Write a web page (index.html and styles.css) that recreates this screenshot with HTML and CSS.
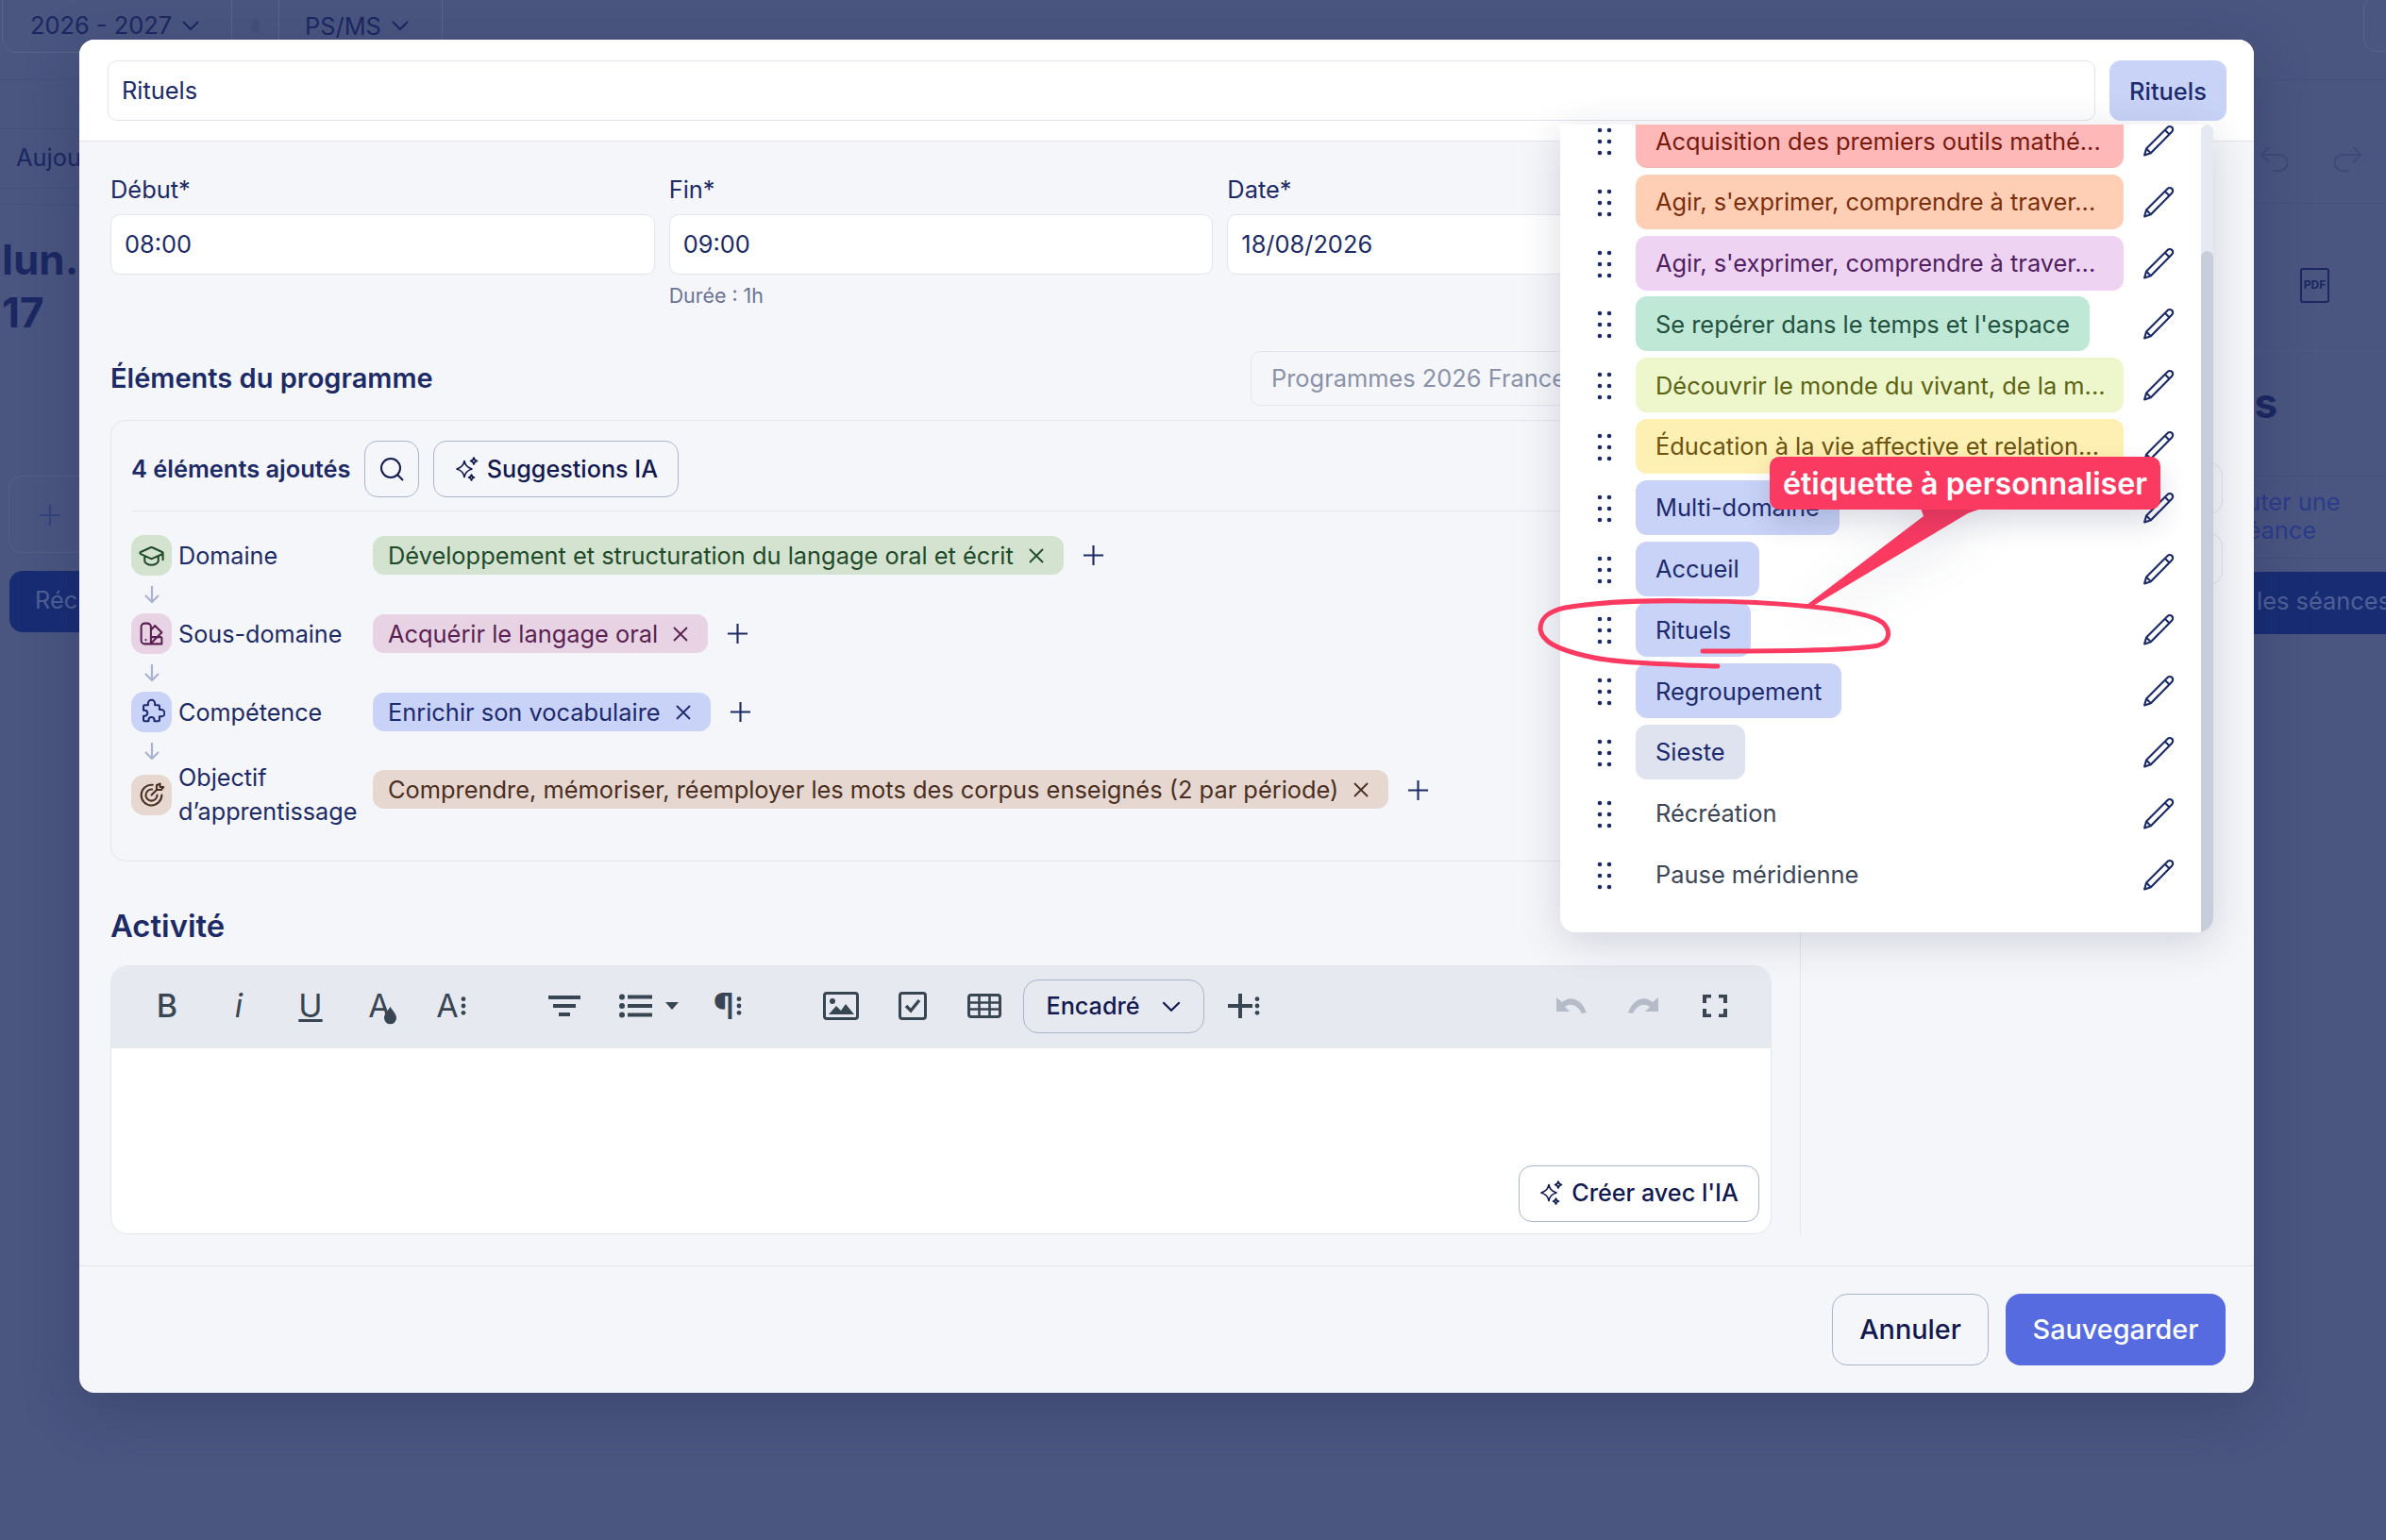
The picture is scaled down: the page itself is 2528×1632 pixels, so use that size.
FILE: index.html
```html
<!DOCTYPE html>
<html lang="fr">
  <head>
    <meta charset="UTF-8" />
    <title>Rituels</title>
    <link rel="stylesheet" href="styles.css">
  </head>
  <body>
    <svg class="sprites" width="0" height="0">
      <symbol id="pencil" viewBox="0 0 32 32"><path d="M2 30.500 3.800 24 25 2.800a3 3 0 0 1 4.400 4.200L8.300 28.400ZM3.800 24l4.500 4.400M22.400 5.400l4.500 4.400" fill="none" stroke="currentColor" stroke-width="2" stroke-linejoin="round"/></symbol>
      <symbol id="grip" viewBox="0 0 16 30"><circle cx="3" cy="3" r="2.300"/><circle cx="13" cy="3" r="2.300"/><circle cx="3" cy="15" r="2.300"/><circle cx="13" cy="15" r="2.300"/><circle cx="3" cy="27" r="2.300"/><circle cx="13" cy="27" r="2.300"/></symbol>
      <symbol id="sparkle" viewBox="0 0 26 26"><path d="M10 4.500c.9 4.800 2.800 6.800 8 8.500-5.200 1.700-7.100 3.700-8 8.500-.9-4.800-2.800-6.800-8-8.500 5.200-1.700 7.100-3.700 8-8.500ZM20 1c.4 2.300 1.200 3.100 3.500 3.500-2.300.4-3.100 1.200-3.500 3.500-.4-2.300-1.200-3.100-3.500-3.500 2.300-.4 3.100-1.200 3.500-3.500ZM17.500 19c.3 2 1 2.700 3 3-2 .3-2.700 1-3 3-.3-2-1-2.700-3-3 2-.3 2.700-1 3-3Z" fill="none" stroke="currentColor" stroke-width="1.700" stroke-linejoin="round"/></symbol>
      <symbol id="chevron" viewBox="0 0 20 12"><path d="M2 2l8 8 8-8" fill="none" stroke="currentColor" stroke-width="2"/></symbol>
      <symbol id="cross" viewBox="0 0 20 20"><path d="M3 3l14 14M17 3 3 17" fill="none" stroke="currentColor" stroke-width="1.800"/></symbol>
      <symbol id="plus" viewBox="0 0 24 24"><path d="M12 1v22M1 12h22" fill="none" stroke="currentColor" stroke-width="2.200"/></symbol>
      <symbol id="down" viewBox="0 0 20 20"><path d="M10 1v17M3 11l7 7 7-7" fill="none" stroke="currentColor" stroke-width="2.200"/></symbol>
      <symbol id="vdots" viewBox="0 0 6 24"><circle cx="3" cy="4" r="2.600"/><circle cx="3" cy="12" r="2.600"/><circle cx="3" cy="20" r="2.600"/></symbol>
    </svg>

    <div class="backdrop">
      <div class="bg-left">
        <div class="bg-top">
          <span class="bg-select">2026 - 2027 <svg class="bg-chev"><use href="#chevron"/></svg></span>
          <i class="bg-dot"></i>
          <span class="bg-select bg-select-small">PS/MS <svg class="bg-chev"><use href="#chevron"/></svg></span>
        </div>
        <div class="bg-empty"></div>
        <div class="bg-today">Aujourd'hui</div>
        <div class="bg-date">lun.<br>17</div>
        <div class="bg-add"><svg class="bg-plus"><use href="#plus"/></svg></div>
        <div class="bg-band">Récréation</div>
      </div>
      <div class="bg-right">
        <div class="bg-right-top"><span class="bg-corner"></span></div>
        <div class="bg-history">
          <svg class="bg-arrow" viewBox="0 0 30 30"><path d="M10 2 2 10l8 8M2 10h19a8 8 0 0 1 0 17h-7" fill="none" stroke="currentColor" stroke-width="2"/></svg>
          <svg class="bg-arrow" viewBox="0 0 30 30"><path d="M20 2l8 8-8 8M28 10H9a8 8 0 0 0 0 17h7" fill="none" stroke="currentColor" stroke-width="2"/></svg>
        </div>
        <div class="bg-pdf"><span class="bg-pdf-box">PDF</span></div>
        <div class="bg-title">Séances</div>
        <div class="bg-action">Ajouter une<br>séance</div>
        <div class="bg-band bg-band-right">Toutes les séances</div>
      </div>
    </div>

    <div class="overlay">
      <div class="modal">
        <div class="modal-head">
          <div class="field title-field">Rituels</div>
          <span class="tag tag-blue tag-head">Rituels</span>
        </div>

        <div class="modal-body">
          <div class="main">
            <div class="fields">
              <div>
                <div class="label">Début*</div>
                <div class="field">08:00</div>
              </div>
              <div>
                <div class="label">Fin*</div>
                <div class="field">09:00</div>
                <div class="hint">Durée : 1h</div>
              </div>
              <div>
                <div class="label">Date*</div>
                <div class="field">18/08/2026</div>
              </div>
            </div>

            <div class="section-head">
              <h2>Éléments du programme</h2>
              <div class="field program-field">Programmes 2026 France</div>
            </div>

            <div class="card">
              <div class="card-head">
                <strong>4 éléments ajoutés</strong>
                <button class="btn btn-icon"><svg width="28" height="28" viewBox="0 0 28 28"><circle cx="13" cy="13" r="10" fill="none" stroke="currentColor" stroke-width="2"/><path d="M20 20l6 6" stroke="currentColor" stroke-width="2"/></svg></button>
                <button class="btn"><svg class="spark"><use href="#sparkle"/></svg>Suggestions IA</button>
              </div>

              <div class="level">
                <span class="level-icon green"><svg viewBox="0 0 24 24"><path d="M21.420 10.920a1 1 0 0 0-.020-1.840L12.830 5.180a2 2 0 0 0-1.660 0L2.600 9.080a1 1 0 0 0 0 1.830l8.570 3.910a2 2 0 0 0 1.660 0zM22 10v6M6 12.500V17c0 1.500 3 3.500 6 3.500s6-2 6-3.500v-4.500"/></svg></span>
                <span class="level-name">Domaine</span>
                <span class="chip green">Développement et structuration du langage oral et écrit <svg class="x"><use href="#cross"/></svg></span>
                <svg class="add"><use href="#plus"/></svg>
              </div>
              <div class="level-arrow"><svg><use href="#down"/></svg></div>
              <div class="level">
                <span class="level-icon pink"><svg viewBox="0 0 24 24"><path d="M11.500 20V6a3 3 0 0 0-3-3H6a3 3 0 0 0-3 3v12a3 3 0 0 0 3 3h15v-5a1 1 0 0 0-1-1h-8.500M11.500 9l3.500-4 6 6-9.500 9.500"/><path d="M7 17.500h.01"/></svg></span>
                <span class="level-name">Sous-domaine</span>
                <span class="chip pink">Acquérir le langage oral <svg class="x"><use href="#cross"/></svg></span>
                <svg class="add"><use href="#plus"/></svg>
              </div>
              <div class="level-arrow"><svg><use href="#down"/></svg></div>
              <div class="level">
                <span class="level-icon blue"><svg viewBox="0 0 24 24"><path d="M9 4.500a3 3 0 0 1 6 0V6h3a1 1 0 0 1 1 1v3h1.500a3 3 0 0 1 0 6H19v3a1 1 0 0 1-1 1h-3.500v-1a2.500 2.500 0 0 0-5 0v1H6a1 1 0 0 1-1-1v-3.500h1a2.500 2.500 0 0 0 0-5H5V7a1 1 0 0 1 1-1h3z"/></svg></span>
                <span class="level-name">Compétence</span>
                <span class="chip blue">Enrichir son vocabulaire <svg class="x"><use href="#cross"/></svg></span>
                <svg class="add"><use href="#plus"/></svg>
              </div>
              <div class="level-arrow level-arrow-short"><svg><use href="#down"/></svg></div>
              <div class="level level-tall">
                <span class="level-icon brown"><svg viewBox="0 0 24 24"><path d="M13 3.100A9 9 0 1 0 21 12M12.500 7.100A5 5 0 1 0 17 12M12 12l5-5M16.500 3.500V7.500h4l2-2.500h-3V2z"/></svg></span>
                <span class="level-name">Objectif d’apprentissage</span>
                <span class="chip brown">Comprendre, mémoriser, réemployer les mots des corpus enseignés (2 par période) <svg class="x"><use href="#cross"/></svg></span>
                <svg class="add"><use href="#plus"/></svg>
              </div>
            </div>

            <h2 class="activity-title">Activité</h2>

            <div class="editor">
              <div class="toolbar">
                <span class="tool tool-text tool-bold">B</span>
                <span class="tool tool-text tool-italic">i</span>
                <span class="tool tool-text tool-under">U</span>
                <span class="tool tool-text">A<svg class="drop" viewBox="0 0 14 20"><path d="M7 0c2 4 7 8 7 13a7 7 0 0 1-14 0C0 8 5 4 7 0z"/></svg></span>
                <span class="tool tool-text tool-size">A<svg class="vd"><use href="#vdots"/></svg></span>

                <span class="tool tool-gap"><svg width="34" height="26" viewBox="0 0 34 26"><path d="M0 2h34v4H0zM5 11h24v4H5zM11 20h12v4H11z"/></svg></span>
                <span class="tool"><svg width="36" height="26" viewBox="0 0 36 26"><circle cx="3" cy="3.500" r="3"/><circle cx="3" cy="13" r="3"/><circle cx="3" cy="22.500" r="3"/><path d="M9 1.500h26v4H9zM9 11h26v4H9zM9 20.500h26v4H9z"/></svg></span>
                <span class="tool tool-caret"><i></i></span>
                <span class="tool tool-text tool-para">¶<svg class="vd"><use href="#vdots"/></svg></span>

                <span class="tool tool-gap tool-gap-wide"><svg width="38" height="30" viewBox="0 0 38 30"><rect x="1.500" y="1.500" width="35" height="27" rx="2.500" fill="none" stroke="currentColor" stroke-width="3"/><circle cx="10" cy="10" r="3"/><path d="M6 24l8-9 5 5 5-7 9 11z"/></svg></span>
                <span class="tool"><svg width="30" height="30" viewBox="0 0 30 30"><rect x="1.500" y="1.500" width="27" height="27" rx="2.500" fill="none" stroke="currentColor" stroke-width="3"/><path d="M8 15l5 5 9-11" fill="none" stroke="currentColor" stroke-width="3.400"/></svg></span>
                <span class="tool"><svg width="36" height="26" viewBox="0 0 36 26"><rect x="1.500" y="1.500" width="33" height="23" rx="2.500" fill="none" stroke="currentColor" stroke-width="3"/><path d="M1 9.500h34M1 16.500h34M12.500 1v24M23.500 1v24" fill="none" stroke="currentColor" stroke-width="2.600"/></svg></span>

                <button class="btn btn-style">Encadré <svg class="chev"><use href="#chevron"/></svg></button>
                <span class="tool tool-more"><svg width="26" height="28" viewBox="0 0 26 28"><path d="M11 1h4v26h-4zM0 12h26v4H0z"/></svg><svg class="vd"><use href="#vdots"/></svg></span>

                <span class="tool tool-right tool-off"><svg width="34" height="20" viewBox="0 0 34 20"><path d="M1 1v15h14l-5-5c5-4 13-3 18 7l5-1C28 3 16-2 7 6z"/></svg></span>
                <span class="tool tool-off"><svg width="34" height="20" viewBox="0 0 34 20"><path d="M33 1v15H19l5-5c-5-4-13-3-18 7l-5-1C6 3 18-2 27 6z"/></svg></span>
                <span class="tool"><svg width="28" height="26" viewBox="0 0 28 26"><path d="M1 10V1h9v3.500H5V10zM27 10V1h-9v3.500h5V10zM1 16v9h9v-3.500H5V16zM27 16v9h-9v-3.500h5V16z"/></svg></span>
              </div>
              <div class="editor-area">
                <button class="btn btn-ai"><svg class="spark"><use href="#sparkle"/></svg>Créer avec l'IA</button>
              </div>
            </div>
          </div>

          <div class="side">
            <div class="side-box"></div>
            <div class="side-box"></div>
          </div>
        </div>

        <div class="modal-foot">
          <button class="btn btn-big">Annuler</button>
          <button class="btn btn-big btn-primary">Sauvegarder</button>
        </div>

        <div class="picker">
          <ul class="picker-list">
            <li><svg class="grip"><use href="#grip"/></svg><span class="tag tag-wide tag-red">Acquisition des premiers outils mathé...</span><svg class="pencil"><use href="#pencil"/></svg></li>
            <li><svg class="grip"><use href="#grip"/></svg><span class="tag tag-wide tag-orange">Agir, s'exprimer, comprendre à traver...</span><svg class="pencil"><use href="#pencil"/></svg></li>
            <li><svg class="grip"><use href="#grip"/></svg><span class="tag tag-wide tag-purple">Agir, s'exprimer, comprendre à traver...</span><svg class="pencil"><use href="#pencil"/></svg></li>
            <li><svg class="grip"><use href="#grip"/></svg><span class="tag tag-teal">Se repérer dans le temps et l'espace</span><svg class="pencil"><use href="#pencil"/></svg></li>
            <li><svg class="grip"><use href="#grip"/></svg><span class="tag tag-wide tag-lime">Découvrir le monde du vivant, de la m...</span><svg class="pencil"><use href="#pencil"/></svg></li>
            <li><svg class="grip"><use href="#grip"/></svg><span class="tag tag-wide tag-yellow">Éducation à la vie affective et relation...</span><svg class="pencil"><use href="#pencil"/></svg></li>
            <li><svg class="grip"><use href="#grip"/></svg><span class="tag tag-blue">Multi-domaine</span><svg class="pencil"><use href="#pencil"/></svg></li>
            <li><svg class="grip"><use href="#grip"/></svg><span class="tag tag-blue">Accueil</span><svg class="pencil"><use href="#pencil"/></svg></li>
            <li><svg class="grip"><use href="#grip"/></svg><span class="tag tag-blue">Rituels</span><svg class="pencil"><use href="#pencil"/></svg></li>
            <li><svg class="grip"><use href="#grip"/></svg><span class="tag tag-blue">Regroupement</span><svg class="pencil"><use href="#pencil"/></svg></li>
            <li><svg class="grip"><use href="#grip"/></svg><span class="tag tag-gray">Sieste</span><svg class="pencil"><use href="#pencil"/></svg></li>
            <li><svg class="grip"><use href="#grip"/></svg><span class="tag tag-none">Récréation</span><svg class="pencil"><use href="#pencil"/></svg></li>
            <li><svg class="grip"><use href="#grip"/></svg><span class="tag tag-none">Pause méridienne</span><svg class="pencil"><use href="#pencil"/></svg></li>
          </ul>
          <div class="scrollbar"><div class="scroll-thumb"></div></div>
        </div>
      </div>
    </div>

    <!-- annotation drawn over the screenshot -->
    <svg class="scribble" width="2528" height="1632" viewBox="0 0 2528 1632">
      <path class="tail" d="M2034 536 2038 547 1913 642 1921 642 2085 544Q2094 540 2106 538L2106 534Z"/>
      <path class="ring" d="M1820 706C1770 704 1710 703 1680 695 1650 688 1634 680 1632 667 1632 655 1640 648 1658 644 1700 637 1760 636 1800 637 1850 637 1890 640 1920 643 1960 647 1985 652 1995 660 2004 669 2002 680 1990 684 1960 690 1870 690 1804 690"/>
    </svg>
    <div class="callout">étiquette à personnaliser</div>
  </body>
</html>
```

FILE: styles.css
```css
* {
  box-sizing: border-box;
}

html,
body {
  margin: 0;
  padding: 0;
  width: 2528px;
  height: 1632px;
  overflow: hidden;
}

body {
  position: relative;
  font-family: Inter, "Liberation Sans", sans-serif;
  font-size: 25.4px;
  color: #1c2a66;
  background-color: #4a5580;
}

button {
  font-family: inherit;
}

ul {
  list-style: none;
  margin: 0;
  padding: 0;
}

.sprites {
  position: absolute;
}

/* dimmed page behind the modal */
.backdrop {
  display: flex;
  justify-content: space-between;
  height: 100%;
  color: #1b2862;
}

.bg-left {
  width: 600px;
}

.bg-right {
  width: 300px;
}

.bg-top {
  display: flex;
  align-items: flex-start;
  height: 85px;
  padding-left: 2px;
  border-bottom: 1px solid #454f78;
}

.bg-select {
  display: flex;
  align-items: center;
  gap: 10px;
  width: 244px;
  height: 59px;
  margin-top: -3px;
  padding-left: 29px;
  border: 1px solid #5a6489;
  border-radius: 0 0 16px 16px;
}

.bg-select-small {
  width: 174px;
  padding-left: 27px;
  border-bottom: 0;
}

.bg-dot {
  width: 8px;
  height: 14px;
  margin: 20px 20px 0 21px;
  border-radius: 4px;
  background-color: #454f78;
}

.bg-chev {
  width: 20px;
  height: 12px;
}

.bg-empty {
  height: 52px;
  border-bottom: 1px solid #454f78;
}

.bg-today {
  height: 63px;
  padding-left: 17px;
  line-height: 60px;
  border-bottom: 1px solid #454f78;
}

.bg-date {
  height: 289px;
  margin-top: 16px;
  padding-top: 30px;
  padding-left: 2px;
  border-top: 1px solid #454f78;
  font-size: 44px;
  font-weight: 700;
  line-height: 56px;
}

.bg-add {
  height: 82px;
  margin-left: 9px;
  margin-top: -1px;
  padding: 28px 0 0 31px;
  border: 1px solid #565f86;
  border-radius: 14px;
  color: #33447f;
}

.bg-plus {
  width: 24px;
  height: 24px;
}

.bg-band {
  height: 65px;
  margin: 19px 0 0 10px;
  padding-left: 27px;
  border-radius: 14px;
  background-color: #182c74;
  color: #4f6096;
  line-height: 62px;
  white-space: nowrap;
}

.bg-right-top {
  position: relative;
  height: 85px;
  border-bottom: 1px solid #454f78;
}

.bg-corner {
  position: absolute;
  right: -10px;
  top: -4px;
  width: 34px;
  height: 59px;
  border: 1px solid #5a6489;
  border-radius: 14px;
}

.bg-history {
  display: flex;
  justify-content: flex-end;
  gap: 49px;
  height: 131px;
  padding: 69px 25px 0 0;
  border-bottom: 1px solid #454f78;
  color: #3f4a76;
}

.bg-arrow {
  width: 30px;
  height: 30px;
}

.bg-pdf {
  height: 156px;
  padding: 68px 0 0 209px;
  border-bottom: 1px solid #4f5a82;
}

.bg-pdf-box {
  display: block;
  width: 31px;
  height: 37px;
  border: 2px solid #1b2862;
  border-radius: 3px;
  font-size: 12px;
  font-weight: 700;
  line-height: 32px;
  text-align: center;
}

.bg-title {
  height: 133px;
  padding: 28px 0 0 0;
  border-bottom: 1px solid #454f78;
  font-size: 44px;
  font-weight: 700;
}

.bg-action {
  height: 87px;
  padding: 12px 45px 0 110px;
  border-bottom: 1px solid #454f78;
  color: #2a3c8c;
  line-height: 30px;
  text-align: center;
}

.bg-band-right {
  height: 66px;
  margin: 14px 0 0 -120px;
  width: 420px;
  padding-left: 195px;
  border-radius: 0;
}

/* modal */
.overlay {
  position: absolute;
  left: 84px;
  top: 42px;
}

.modal {
  position: relative;
  display: flex;
  flex-direction: column;
  width: 2304px;
  height: 1434px;
  border-radius: 16px;
  background-color: #f5f6f9;
  box-shadow: 0 16px 60px rgba(30, 36, 70, 0.28);
}

.modal-head {
  display: flex;
  gap: 15px;
  height: 108px;
  padding: 22px 29px 22px 30px;
  border-radius: 16px 16px 0 0;
  border-bottom: 1px solid #e2e5ee;
  background-color: #fff;
}

.field {
  height: 64px;
  padding: 0 14px;
  border: 1px solid #e2e5ee;
  border-radius: 10px;
  background-color: #fff;
  line-height: 62px;
}

.title-field {
  flex: 1;
}

.modal-body {
  display: flex;
  flex: 1;
  padding: 36px 33px 33px 33px;
}

.main {
  width: 1760px;
  flex-shrink: 0;
}

.fields {
  display: grid;
  grid-template-columns: repeat(3, 1fr);
  gap: 15px;
  height: 141px;
}

.label {
  height: 41px;
  line-height: 30px;
}

.hint {
  margin-top: 9px;
  font-size: 21.4px;
  line-height: 26px;
  color: #6a7397;
}

.section-head {
  display: flex;
  align-items: center;
  justify-content: space-between;
  margin-top: 45px;
}

h2 {
  margin: 0 0 2px;
  font-size: 29px;
  font-weight: 600;
}

.program-field {
  width: 552px;
  height: 58px;
  padding: 0 21px;
  border-color: #e2e5ee;
  background-color: #f5f6f9;
  color: #8a91a8;
  line-height: 56px;
  white-space: nowrap;
}

.card {
  height: 468px;
  margin-top: 15px;
  padding: 21px 22px 0 21px;
  border: 1px solid #e2e5ee;
  border-radius: 16px;
}

.card-head {
  display: flex;
  align-items: center;
  gap: 15px;
  height: 75px;
  padding: 0 0 15px 0;
  margin-bottom: 25px;
  border-bottom: 1px solid #e2e5ee;
}

.card-head strong {
  font-weight: 600;
}

.btn {
  display: flex;
  align-items: center;
  justify-content: center;
  gap: 8px;
  width: 260px;
  height: 60px;
  padding: 0;
  border: 1px solid #a9b4ce;
  border-radius: 14px;
  background-color: transparent;
  color: #11194f;
  font-size: 25.2px;
  font-weight: 500;
}

.btn-icon {
  width: 58px;
}

.spark {
  width: 26px;
  height: 26px;
}

.level {
  display: flex;
  align-items: center;
  height: 43px;
}

.level-icon {
  display: flex;
  align-items: center;
  justify-content: center;
  flex-shrink: 0;
  width: 43px;
  height: 43px;
  border-radius: 14px;
}

.level-icon svg {
  width: 29px;
  height: 29px;
  fill: none;
  stroke: currentColor;
  stroke-width: 1.700;
  stroke-linejoin: round;
  stroke-linecap: round;
}

.level-name {
  width: 213px;
  flex-shrink: 0;
  padding-left: 7px;
  font-size: 25.2px;
  line-height: 36px;
}

.chip {
  display: flex;
  align-items: center;
  gap: 14px;
  height: 41px;
  padding: 0 19px 0 16px;
  border-radius: 12px;
  white-space: nowrap;
}

.x {
  width: 20px;
  height: 20px;
}

.add {
  width: 23px;
  height: 23px;
  margin-left: 20px;
}

.green {
  background-color: #d3e3d0;
  color: #1f4a2a;
}

.pink {
  background-color: #e8d3e5;
  color: #5a1f52;
}

.blue {
  background-color: #c9d3f7;
  color: #1c2a6e;
}

.brown {
  background-color: #e6d8d0;
  color: #4a2e22;
}

.level-arrow {
  height: 40px;
  padding: 10px 0 0 12px;
  color: #a9b2cf;
}

.level-arrow svg {
  width: 20px;
  height: 20px;
  display: block;
}

.level-arrow-short {
  height: 30px;
}

.level-tall {
  height: 72px;
}

.level-tall .chip {
  align-self: flex-start;
  margin-top: 10px;
}

.level-tall .add {
  align-self: flex-start;
  margin-top: 20px;
}

.activity-title {
  margin-top: 48px;
  margin-bottom: 0;
  height: 40px;
  font-size: 32.8px;
  line-height: 40px;
}

.editor {
  height: 285px;
  margin-top: 22px;
  border: 1px solid #e2e5ee;
  border-radius: 18px;
  background-color: #fff;
  overflow: hidden;
}

.toolbar {
  display: flex;
  align-items: center;
  height: 87px;
  padding: 0 21px 3px;
  background-color: #e7e9f0;
  color: #384653;
  fill: #384653;
}

.tool {
  display: flex;
  align-items: center;
  justify-content: center;
  flex-shrink: 0;
  width: 76px;
}

.tool-text {
  font-size: 34px;
  line-height: 40px;
}

.tool-bold {
  font-weight: 500;
}

.tool-italic {
  font-style: italic;
}

.tool-under {
  text-decoration: underline;
  text-decoration-thickness: 3px;
  text-underline-offset: 2px;
}

.tool-size {
  margin-left: -3px;
  margin-right: 3px;
}

.drop {
  width: 13px;
  height: 20px;
  margin: 20px 0 0 -7px;
}

.vd {
  width: 6px;
  height: 22px;
  margin-left: 2px;
}

.tool-gap {
  margin-left: 41px;
}

.tool-gap-wide {
  margin-left: 44px;
}

.tool-caret {
  width: 22px;
  margin-left: -11px;
}

.tool-caret i {
  width: 0;
  height: 0;
  border: 7px solid transparent;
  border-top: 8px solid #384653;
  border-bottom: 0;
}

.tool-para {
  margin-left: 10px;
  font-size: 38px;
  font-weight: 500;
}

.tool-more {
  margin-left: 4px;
}

.tool-right {
  margin-left: auto;
}

.tool-off {
  fill: #b5bcc8;
}

.btn-style {
  width: 192px;
  height: 57px;
  margin-left: 3px;
  gap: 22px;
  color: #11194f;
  border-radius: 16px;
}

.chev {
  width: 22px;
  height: 13px;
}

.editor-area {
  display: flex;
  justify-content: flex-end;
  padding: 124px 12px 0 0;
}

.btn-ai {
  width: 255px;
  background-color: #fff;
  padding-bottom: 2px;
}

.side {
  display: flex;
  flex-direction: column;
  gap: 20px;
  width: 448px;
  margin-left: 30px;
  padding-top: 304px;
  border-left: 1px solid #e2e5ee;
}

.side-box {
  height: 55px;
  border: 1px solid #dde0ea;
  border-radius: 14px;
}

.modal-foot {
  display: flex;
  justify-content: flex-end;
  gap: 18px;
  height: 135px;
  padding: 29px 30px 0 0;
  border-top: 1px solid #e2e5ee;
}

.btn-big {
  width: 166px;
  height: 76px;
  padding-bottom: 2px;
  font-size: 28.8px;
  border-radius: 16px;
}

.btn-primary {
  width: 233px;
  border: 0;
  background-color: #566be0;
  color: #fff;
}

/* tag picker */
.tag {
  display: flex;
  align-items: center;
  height: 58px;
  padding: 0 21px;
  border-radius: 12px;
  white-space: nowrap;
}

.tag-head {
  justify-content: center;
  width: 124px;
  height: 64px;
  padding: 0;
  background-color: #c9d3f7;
  color: #1c2a6e;
  font-weight: 500;
}

.picker {
  position: absolute;
  left: 1569px;
  top: 90px;
  display: flex;
  width: 692px;
  height: 856px;
  border-radius: 0 0 16px 16px;
  background-color: #fff;
  box-shadow: 0 10px 44px rgba(30, 40, 80, 0.16);
  overflow: hidden;
}

.picker-list {
  display: flex;
  flex-direction: column;
  gap: 6.800px;
  flex: 1;
  margin-top: -12px;
}

.picker-list li {
  position: relative;
  display: flex;
  align-items: center;
  flex-shrink: 0;
  height: 58px;
  padding-left: 80px;
}

.grip {
  position: absolute;
  left: 39px;
  top: 15px;
  width: 16px;
  height: 30px;
  fill: #1c2a66;
}

.pencil {
  position: absolute;
  left: 617px;
  top: 12px;
  width: 34px;
  height: 34px;
  color: #1c2a66;
}

.tag-wide {
  width: 517px;
}

.tag-red {
  background-color: #ffb8b8;
  color: #7a1a0e;
}

.tag-orange {
  background-color: #ffcfb5;
  color: #7a2e0c;
}

.tag-purple {
  background-color: #efd3f2;
  color: #4f1f60;
}

.tag-teal {
  background-color: #c0e8d6;
  color: #22503f;
}

.tag-lime {
  background-color: #eef6cc;
  color: #5a6314;
}

.tag-yellow {
  background-color: #fef0b3;
  color: #6b5310;
}

.tag-blue {
  background-color: #c9d3f7;
  color: #1c2a6e;
}

.tag-gray {
  background-color: #dfe3f0;
  color: #1c2a6e;
}

.tag-none {
  color: #3c4656;
}

.scrollbar {
  width: 13px;
  flex-shrink: 0;
  padding-top: 134px;
  border-radius: 8px 8px 0 0;
  background-color: #e6e8f2;
}

.scroll-thumb {
  height: 100%;
  border-radius: 8px 8px 0 0;
  background-color: #c8cddc;
}

/* red annotation */
.scribble {
  position: absolute;
  left: 0;
  top: 0;
  pointer-events: none;
}

.tail {
  fill: #fb3a62;
  filter: drop-shadow(0 14px 24px rgba(30, 40, 80, 0.14));
}

.ring {
  fill: none;
  stroke: #fb3a62;
  stroke-width: 5px;
  stroke-linecap: round;
}

.callout {
  position: absolute;
  left: 1875px;
  top: 484px;
  display: flex;
  align-items: center;
  justify-content: center;
  width: 414px;
  height: 56px;
  border-radius: 10px;
  background-color: #fb3a62;
  box-shadow: 0 14px 30px rgba(30, 40, 80, 0.16);
  color: #fff;
  font-size: 32.2px;
  font-weight: 600;
  white-space: nowrap;
}
```
